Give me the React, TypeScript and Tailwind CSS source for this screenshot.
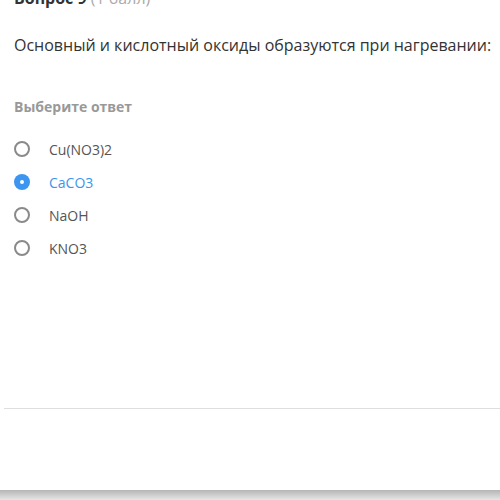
import React from "react";

const options = ["Cu(NO3)2", "CaCO3", "NaOH", "KNO3"];

export default function App() {
  return (
    <div
      className="w-[500px] h-[500px] bg-white overflow-hidden flex flex-col relative"
      style={{ fontFamily: '"Open Sans", sans-serif' }}
    >
      <div className="px-[14px] -mt-[12px] h-[20px] leading-[20px] text-[16px] whitespace-nowrap">
        <span className="font-bold text-[#333]">Вопрос 9</span>
        <span className="text-[#aaa]"> (1 балл)</span>
      </div>
      <div className="px-[14px] mt-[26px] text-[16px] leading-[22px] text-[#333] whitespace-nowrap">
        Основный и кислотный оксиды образуются при нагревании:
      </div>
      <div className="px-[14px] mt-[41px] text-[14px] leading-[20px] font-bold text-[#999]">
        Выберите ответ
      </div>
      <div className="flex flex-col mt-[22px] gap-[13px] pl-[14px]">
        {options.map((o, i) => {
          const sel = i === 1;
          return (
            <div key={o} className="flex items-center h-[20px]">
              {sel ? (
                <span className="w-[16px] h-[16px] rounded-full bg-[#3c95f0] flex items-center justify-center">
                  <span className="w-[4px] h-[4px] rounded-full bg-white" />
                </span>
              ) : (
                <span className="w-[16px] h-[16px] rounded-full border-2 border-[#8a8a8a] box-border" />
              )}
              <span
                className={`ml-[19px] text-[14px] ${sel ? "text-[#3c95f0]" : "text-[#555]"}`}
              >
                {o}
              </span>
            </div>
          );
        })}
      </div>
      <div className="flex-1" />
      <div className="ml-[4px] h-[1px] bg-[#dedede] mb-[81px]" />
      <div className="h-[10px] bg-gradient-to-b from-[#b5b5b5] to-[#e6e6e6]" />
    </div>
  );
}
